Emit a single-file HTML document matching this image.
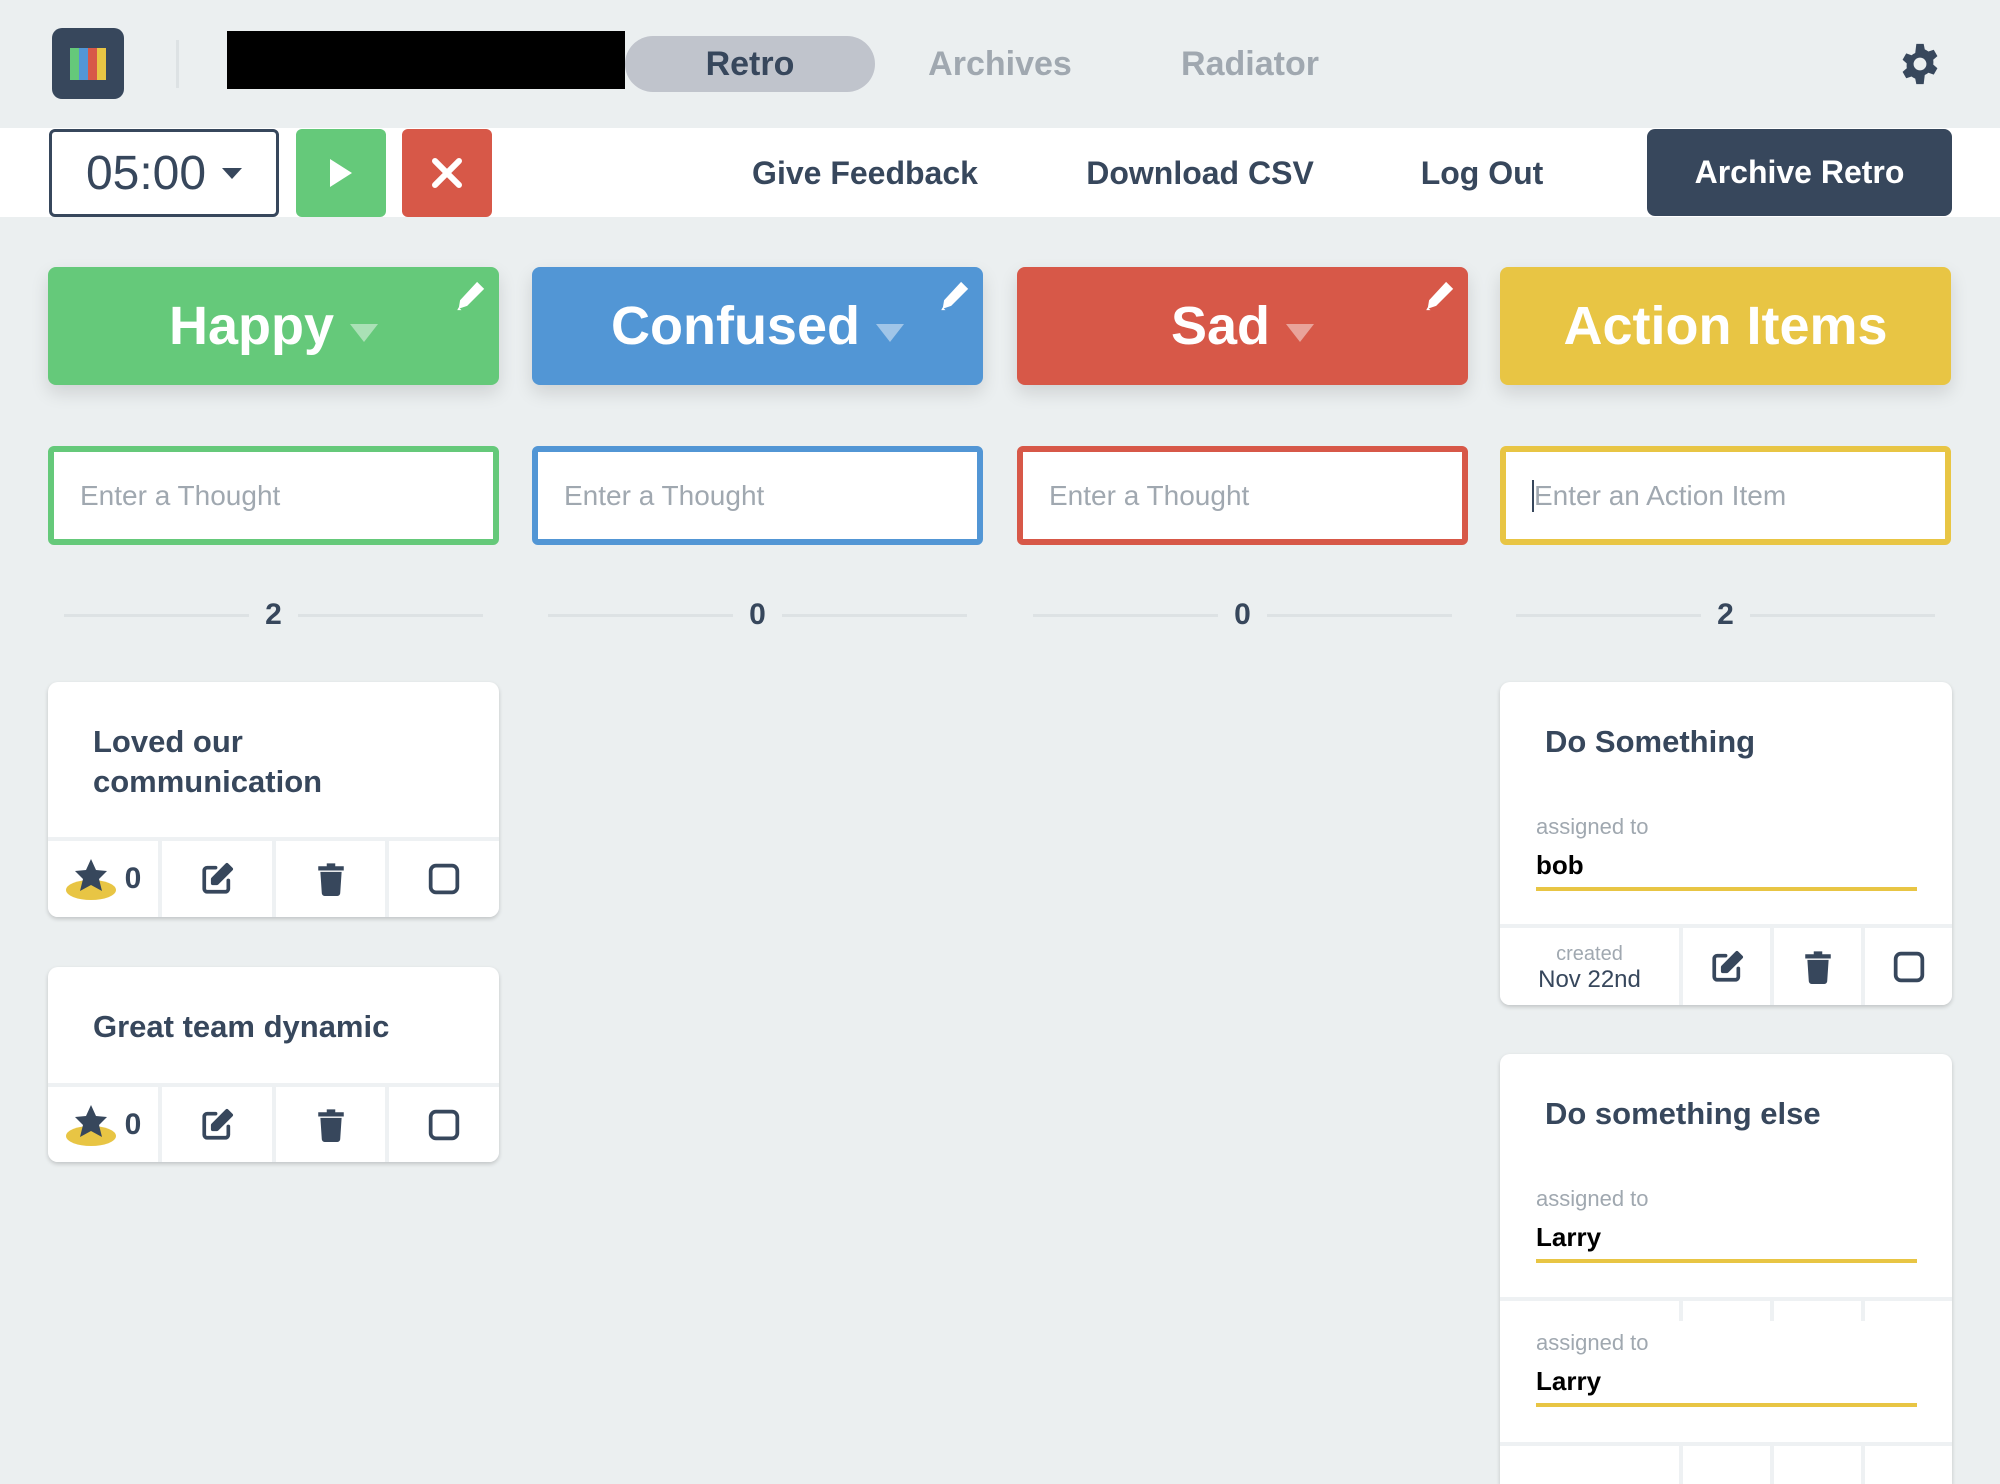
<!DOCTYPE html>
<html><head><meta charset="utf-8"><style>
*{box-sizing:border-box;margin:0;padding:0}
body{width:2000px;height:1464px;overflow:hidden;background:#ebeff0;font-family:"Liberation Sans",sans-serif;font-weight:bold;color:#37475c;position:relative}
.a{position:absolute}
.c{display:flex;align-items:center;justify-content:center}
.hdr{left:48px;width:451px;top:267px;height:118px;border-radius:8px;color:#fff;font-size:54px;box-shadow:0 8px 18px rgba(0,0,0,.12)}
.tri{width:0;height:0;border-left:14px solid transparent;border-right:14px solid transparent;border-top:18px solid rgba(255,255,255,.45);margin-left:16px;margin-top:14px}
.pen{position:absolute;right:12px;top:12px}
.inp{top:446px;height:99px;width:451px;border-radius:6px;background:#fff;border:6px solid;font-weight:normal;font-size:28px;color:#a0a8b0;padding-left:26px;display:flex;align-items:center}
.cnt{top:597px;width:451px;height:36px;font-size:30px}
.cnt:before,.cnt:after{content:"";flex:1;height:3px;background:#dde2e4;margin:0 16px}
.card{background:#fff;border-radius:10px;box-shadow:0 2px 4px rgba(0,0,0,.18);overflow:hidden}
.foot{position:absolute;left:0;right:0;bottom:0;display:flex;background:#eef1f3;gap:4px;padding-top:4px}
.foot>div{background:#fff;display:flex;align-items:center;justify-content:center}
.lbl{font-size:22px;color:#a0a8b0;font-weight:normal}
.who{font-size:26px;color:#000;border-bottom:4px solid #e8c544;padding-bottom:6px;width:381px}
</style></head><body>
<!-- top nav -->
<div class="a" style="left:52px;top:28px;width:72px;height:71px;background:#37475c;border-radius:10px"></div>
<div class="a" style="left:70px;top:48px;width:36px;height:32px;display:flex"><i style="flex:1;background:#65c97a"></i><i style="flex:1;background:#5296d5"></i><i style="flex:1;background:#d75848"></i><i style="flex:1;background:#e8c544"></i></div>
<div class="a" style="left:176px;top:40px;width:3px;height:48px;background:#dde2e4"></div>
<div class="a" style="left:227px;top:31px;width:398px;height:58px;background:#000"></div>
<div class="a c" style="left:625px;top:36px;width:250px;height:56px;background:#c0c4cc;border-radius:28px;font-size:34px">Retro</div>
<div class="a c" style="left:900px;top:36px;width:200px;height:56px;font-size:34px;color:#a0a8b0">Archives</div>
<div class="a c" style="left:1150px;top:36px;width:200px;height:56px;font-size:34px;color:#a0a8b0">Radiator</div>
<svg class="a" style="left:1898px;top:42px" width="44" height="44" viewBox="0 0 24 24"><path fill="#37475c" d="M10 1h4l.6 3a8 8 0 0 1 2 1.2l2.9-1 2 3.5-2.3 2a8 8 0 0 1 0 2.6l2.3 2-2 3.5-2.9-1a8 8 0 0 1-2 1.2L14 23h-4l-.6-3a8 8 0 0 1-2-1.2l-2.9 1-2-3.5 2.3-2a8 8 0 0 1 0-2.6l-2.3-2 2-3.5 2.9 1a8 8 0 0 1 2-1.2zM12 8.5a3.5 3.5 0 1 0 0 7 3.5 3.5 0 0 0 0-7z"/></svg>
<!-- toolbar -->
<div class="a" style="left:0;top:128px;width:2000px;height:89px;background:#fff"></div>
<div class="a c" style="left:49px;top:129px;width:230px;height:88px;border:3px solid #37475c;border-radius:6px;font-size:48px;font-weight:normal">05:00<span style="width:0;height:0;border-left:10px solid transparent;border-right:10px solid transparent;border-top:11px solid #37475c;margin-left:16px"></span></div>
<div class="a c" style="left:296px;top:129px;width:90px;height:88px;background:#65c97a;border-radius:6px"><svg width="30" height="34" viewBox="0 0 30 34"><path d="M4 3 L26 17 L4 31Z" fill="#fff"/></svg></div>
<div class="a c" style="left:402px;top:129px;width:90px;height:88px;background:#d75848;border-radius:6px"><svg width="34" height="34" viewBox="0 0 34 34"><path d="M5 5L29 29M29 5L5 29" stroke="#fff" stroke-width="6" stroke-linecap="round"/></svg></div>
<div class="a c" style="left:740px;top:150px;width:250px;height:46px;font-size:32px">Give Feedback</div>
<div class="a c" style="left:1075px;top:150px;width:250px;height:46px;font-size:32px">Download CSV</div>
<div class="a c" style="left:1382px;top:150px;width:200px;height:46px;font-size:32px">Log Out</div>
<div class="a c" style="left:1647px;top:129px;width:305px;height:87px;background:#37475c;border-radius:8px;color:#fff;font-size:32px">Archive Retro</div>
<!-- headers -->
<div class="a hdr c" style="left:48px;background:#65c97a">Happy<span class="tri"></span><svg class="pen" width="34" height="34" viewBox="0 0 24 24"><path fill="#fff" d="M17 2l5 5-12 12-6 2 1-6zM3 22l1-2 2 2z"/></svg></div>
<div class="a hdr c" style="left:532px;background:#5296d5">Confused<span class="tri"></span><svg class="pen" width="34" height="34" viewBox="0 0 24 24"><path fill="#fff" d="M17 2l5 5-12 12-6 2 1-6zM3 22l1-2 2 2z"/></svg></div>
<div class="a hdr c" style="left:1017px;background:#d75848">Sad<span class="tri"></span><svg class="pen" width="34" height="34" viewBox="0 0 24 24"><path fill="#fff" d="M17 2l5 5-12 12-6 2 1-6zM3 22l1-2 2 2z"/></svg></div>
<div class="a hdr c" style="left:1500px;background:#e8c544">Action Items</div>
<!-- inputs -->
<div class="a inp" style="left:48px;border-color:#65c97a">Enter a Thought</div>
<div class="a inp" style="left:532px;border-color:#5296d5">Enter a Thought</div>
<div class="a inp" style="left:1017px;border-color:#d75848">Enter a Thought</div>
<div class="a inp" style="left:1500px;border-color:#e8c544"><span style="border-left:2px solid #37475c;height:32px;margin-right:0"></span>Enter an Action Item</div>
<!-- counts -->
<div class="a cnt c" style="left:48px">2</div>
<div class="a cnt c" style="left:532px">0</div>
<div class="a cnt c" style="left:1017px">0</div>
<div class="a cnt c" style="left:1500px">2</div>
<!-- thought cards -->
<div class="a card" style="left:48px;top:682px;width:451px;height:235px">
 <div style="position:absolute;left:45px;top:40px;font-size:31px;line-height:40px">Loved our<br>communication</div>
 <div class="foot" style="height:80px">
  <div style="width:110px"><svg width="52" height="44" viewBox="0 0 52 44"><ellipse cx="26" cy="33" rx="25" ry="10" fill="#e8c544"/><path d="M26 2l5 11 11 1-8 8 3 12-11-6-11 6 3-12-8-8 11-1z" fill="#37475c"/></svg><span style="font-size:30px;margin-left:8px">0</span></div>
  <div style="flex:1"><svg width="34" height="34" viewBox="0 0 24 24" fill="none" stroke="#37475c" stroke-width="2.6" stroke-linecap="round" stroke-linejoin="round"><path d="M11 4H5a2 2 0 0 0-2 2v13a2 2 0 0 0 2 2h13a2 2 0 0 0 2-2v-6"/><path d="M19 2l3 3-10 10H9v-3z" fill="#37475c"/></svg></div>
  <div style="flex:1"><svg width="30" height="34" viewBox="0 0 20 24"><path fill="#37475c" d="M1 3h18v3H1zM7 1h6v2H7zM2.5 7h15l-1 15a2 2 0 0 1-2 2h-9a2 2 0 0 1-2-2z"/></svg></div>
  <div style="flex:1"><svg width="32" height="32" viewBox="0 0 24 24"><rect x="2" y="2" width="20" height="20" rx="4" fill="none" stroke="#37475c" stroke-width="2.8"/></svg></div>
 </div>
</div>
<div class="a card" style="left:48px;top:967px;width:451px;height:195px">
 <div style="position:absolute;left:45px;top:40px;font-size:31px;line-height:40px">Great team dynamic</div>
 <div class="foot" style="height:79px">
  <div style="width:110px"><svg width="52" height="44" viewBox="0 0 52 44"><ellipse cx="26" cy="33" rx="25" ry="10" fill="#e8c544"/><path d="M26 2l5 11 11 1-8 8 3 12-11-6-11 6 3-12-8-8 11-1z" fill="#37475c"/></svg><span style="font-size:30px;margin-left:8px">0</span></div>
  <div style="flex:1"><svg width="34" height="34" viewBox="0 0 24 24" fill="none" stroke="#37475c" stroke-width="2.6" stroke-linecap="round" stroke-linejoin="round"><path d="M11 4H5a2 2 0 0 0-2 2v13a2 2 0 0 0 2 2h13a2 2 0 0 0 2-2v-6"/><path d="M19 2l3 3-10 10H9v-3z" fill="#37475c"/></svg></div>
  <div style="flex:1"><svg width="30" height="34" viewBox="0 0 20 24"><path fill="#37475c" d="M1 3h18v3H1zM7 1h6v2H7zM2.5 7h15l-1 15a2 2 0 0 1-2 2h-9a2 2 0 0 1-2-2z"/></svg></div>
  <div style="flex:1"><svg width="32" height="32" viewBox="0 0 24 24"><rect x="2" y="2" width="20" height="20" rx="4" fill="none" stroke="#37475c" stroke-width="2.8"/></svg></div>
 </div>
</div>
<!-- action cards -->
<div class="a card" style="left:1500px;top:682px;width:452px;height:323px">
 <div style="position:absolute;left:45px;top:42px;font-size:31px">Do Something</div>
 <div class="lbl" style="position:absolute;left:36px;top:132px">assigned to</div>
 <div class="who" style="position:absolute;left:36px;top:168px">bob</div>
 <div class="foot" style="height:81px">
  <div style="width:179px;flex-direction:column;line-height:26px"><span class="lbl" style="font-size:20px">created</span><span style="font-size:24px;font-weight:normal">Nov 22nd</span></div>
  <div style="flex:1"><svg width="34" height="34" viewBox="0 0 24 24" fill="none" stroke="#37475c" stroke-width="2.6" stroke-linecap="round" stroke-linejoin="round"><path d="M11 4H5a2 2 0 0 0-2 2v13a2 2 0 0 0 2 2h13a2 2 0 0 0 2-2v-6"/><path d="M19 2l3 3-10 10H9v-3z" fill="#37475c"/></svg></div>
  <div style="flex:1"><svg width="30" height="34" viewBox="0 0 20 24"><path fill="#37475c" d="M1 3h18v3H1zM7 1h6v2H7zM2.5 7h15l-1 15a2 2 0 0 1-2 2h-9a2 2 0 0 1-2-2z"/></svg></div>
  <div style="flex:1"><svg width="32" height="32" viewBox="0 0 24 24"><rect x="2" y="2" width="20" height="20" rx="4" fill="none" stroke="#37475c" stroke-width="2.8"/></svg></div>
 </div>
</div>
<div class="a card" style="left:1500px;top:1054px;width:452px;height:430px;border-radius:10px 10px 0 0">
 <div style="position:absolute;left:45px;top:42px;font-size:31px">Do something else</div>
 <div class="lbl" style="position:absolute;left:36px;top:132px">assigned to</div>
 <div class="who" style="position:absolute;left:36px;top:168px">Larry</div>
 <div style="position:absolute;left:0;right:0;top:243px;height:24px;background:#eef1f3;display:flex;gap:4px;padding-top:4px"><i style="width:179px;background:#fff"></i><i style="flex:1;background:#fff"></i><i style="flex:1;background:#fff"></i><i style="flex:1;background:#fff"></i></div>
 <div class="lbl" style="position:absolute;left:36px;top:276px">assigned to</div>
 <div class="who" style="position:absolute;left:36px;top:312px">Larry</div>
 <div style="position:absolute;left:0;right:0;top:388px;height:60px;background:#eef1f3;display:flex;gap:4px;padding-top:4px"><i style="width:179px;background:#fff"></i><i style="flex:1;background:#fff"></i><i style="flex:1;background:#fff"></i><i style="flex:1;background:#fff"></i></div>
</div>
</body></html>
